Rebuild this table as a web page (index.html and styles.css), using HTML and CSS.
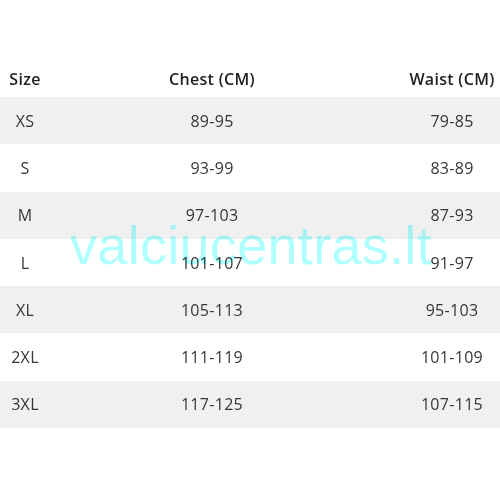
FILE: index.html
```html
<!DOCTYPE html>
<html>
<head>
<meta charset="utf-8">
<link rel="stylesheet" href="styles.css">
</head>
<body>
<div class="page">
  <div class="chart">
    <div class="row head"><span class="c1">Size</span><span class="c2">Chest (CM)</span><span class="c3">Waist (CM)</span></div>
    <div class="row alt"><span class="c1">XS</span><span class="c2">89-95</span><span class="c3">79-85</span></div>
    <div class="row"><span class="c1">S</span><span class="c2">93-99</span><span class="c3">83-89</span></div>
    <div class="row alt"><span class="c1">M</span><span class="c2">97-103</span><span class="c3">87-93</span></div>
    <div class="row"><span class="c1">L</span><span class="c2">101-107</span><span class="c3">91-97</span></div>
    <div class="row alt"><span class="c1">XL</span><span class="c2">105-113</span><span class="c3">95-103</span></div>
    <div class="row"><span class="c1">2XL</span><span class="c2">111-119</span><span class="c3">101-109</span></div>
    <div class="row alt"><span class="c1">3XL</span><span class="c2">117-125</span><span class="c3">107-115</span></div>
  </div>
  <div class="watermark">valciucentras.lt</div>
</div>
</body>
</html>
```
FILE: styles.css
```css
html, body {
  margin: 0;
  padding: 0;
  background: #fff;
}
.page {
  position: relative;
  width: 500px;
  height: 500px;
  padding-top: 60px;
  box-sizing: border-box;
  font-family: "Open Sans", "DejaVu Sans", sans-serif;
  font-size: 16px;
  letter-spacing: 0.3px;
  color: #363636;
}
.chart {
  display: flex;
  flex-direction: column;
}
.row {
  display: grid;
  grid-template-columns: 50px 324px 1fr;
  align-items: center;
  height: 47.3px;
}
.row.head {
  height: 37px;
  font-weight: 600;
  color: #222;
}
.row.alt {
  background: #f0f0f0;
}
.c1, .c2, .c3 {
  text-align: center;
  white-space: nowrap;
}
.c3 {
  padding-left: 30px;
}
.watermark {
  position: absolute;
  left: 70px;
  top: 213px;
  font-family: "Liberation Sans", Arial, sans-serif;
  font-size: 54px;
  line-height: 64px;
  color: #b0ffff;
  mix-blend-mode: multiply;
  white-space: nowrap;
}
```
